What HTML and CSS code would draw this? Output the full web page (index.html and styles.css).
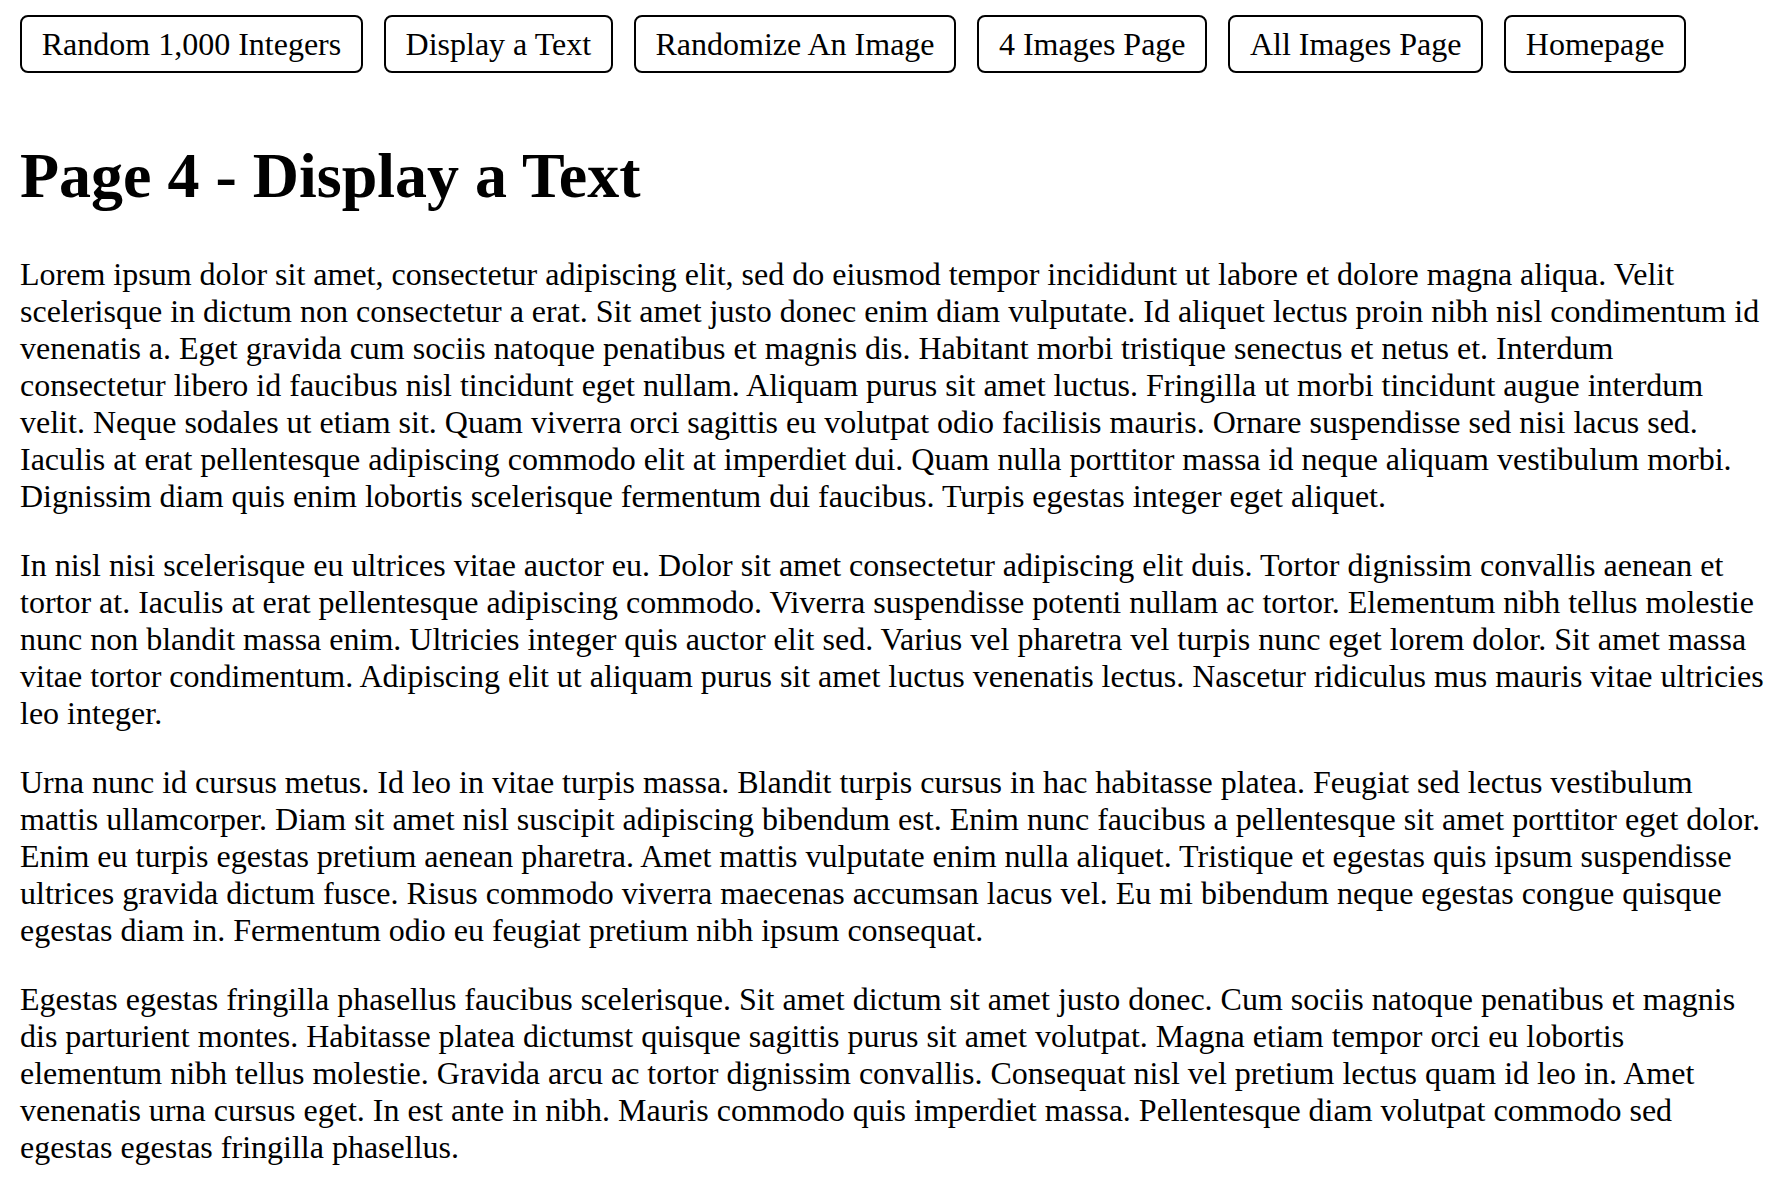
FILE: index.html
```html
<!DOCTYPE html>
<html lang="en">
<head>
<meta charset="utf-8">
<title>Page 4 - Display a Text</title>
<link rel="stylesheet" href="styles.css">
</head>
<body>
<div class="page">
  <nav class="nav">
    <button class="nav-btn">Random 1,000 Integers</button>
    <button class="nav-btn">Display a Text</button>
    <button class="nav-btn">Randomize An Image</button>
    <button class="nav-btn">4 Images Page</button>
    <button class="nav-btn">All Images Page</button>
    <button class="nav-btn">Homepage</button>
  </nav>
  <h1 class="title">Page 4 - Display a Text</h1>
  <p class="para">Lorem ipsum dolor sit amet, consectetur adipiscing elit, sed do eiusmod tempor incididunt ut labore et dolore magna aliqua. Velit scelerisque in dictum non consectetur a erat. Sit amet justo donec enim diam vulputate. Id aliquet lectus proin nibh nisl condimentum id venenatis a. Eget gravida cum sociis natoque penatibus et magnis dis. Habitant morbi tristique senectus et netus et. Interdum consectetur libero id faucibus nisl tincidunt eget nullam. Aliquam purus sit amet luctus. Fringilla ut morbi tincidunt augue interdum velit. Neque sodales ut etiam sit. Quam viverra orci sagittis eu volutpat odio facilisis mauris. Ornare suspendisse sed nisi lacus sed. Iaculis at erat pellentesque adipiscing commodo elit at imperdiet dui. Quam nulla porttitor massa id neque aliquam vestibulum morbi. Dignissim diam quis enim lobortis scelerisque fermentum dui faucibus. Turpis egestas integer eget aliquet.</p>
  <p class="para">In nisl nisi scelerisque eu ultrices vitae auctor eu. Dolor sit amet consectetur adipiscing elit duis. Tortor dignissim convallis aenean et tortor at. Iaculis at erat pellentesque adipiscing commodo. Viverra suspendisse potenti nullam ac tortor. Elementum nibh tellus molestie nunc non blandit massa enim. Ultricies integer quis auctor elit sed. Varius vel pharetra vel turpis nunc eget lorem dolor. Sit amet massa vitae tortor condimentum. Adipiscing elit ut aliquam purus sit amet luctus venenatis lectus. Nascetur ridiculus mus mauris vitae ultricies leo integer.</p>
  <p class="para">Urna nunc id cursus metus. Id leo in vitae turpis massa. Blandit turpis cursus in hac habitasse platea. Feugiat sed lectus vestibulum mattis ullamcorper. Diam sit amet nisl suscipit adipiscing bibendum est. Enim nunc faucibus a pellentesque sit amet porttitor eget dolor. Enim eu turpis egestas pretium aenean pharetra. Amet mattis vulputate enim nulla aliquet. Tristique et egestas quis ipsum suspendisse ultrices gravida dictum fusce. Risus commodo viverra maecenas accumsan lacus vel. Eu mi bibendum neque egestas congue quisque egestas diam in. Fermentum odio eu feugiat pretium nibh ipsum consequat.</p>
  <p class="para">Egestas egestas fringilla phasellus faucibus scelerisque. Sit amet dictum sit amet justo donec. Cum sociis natoque penatibus et magnis dis parturient montes. Habitasse platea dictumst quisque sagittis purus sit amet volutpat. Magna etiam tempor orci eu lobortis elementum nibh tellus molestie. Gravida arcu ac tortor dignissim convallis. Consequat nisl vel pretium lectus quam id leo in. Amet venenatis urna cursus eget. In est ante in nibh. Mauris commodo quis imperdiet massa. Pellentesque diam volutpat commodo sed egestas egestas fringilla phasellus.</p>
</div>
</body>
</html>
```

FILE: styles.css
```css
html, body {
  margin: 0;
  padding: 0;
  background: #ffffff;
}

body {
  font-family: "Liberation Serif", "Times New Roman", Times, serif;
  color: #000000;
  font-size: 32px;
}

.page {
  padding: 15px 10px 20px 20px;
}

.nav {
  display: flex;
  flex-wrap: wrap;
  gap: 21px;
}

.nav-btn {
  font-family: "Liberation Serif", "Times New Roman", Times, serif;
  font-size: 32px;
  line-height: 38px;
  color: #000000;
  background: #ffffff;
  border: 2px solid #000000;
  border-radius: 8px;
  padding: 8px 19.7px;
  margin: 0;
  cursor: pointer;
}

.title {
  font-size: 64px;
  font-weight: bold;
  line-height: normal;
  margin: 66px 0 43px 0;
}

.para {
  font-size: 32px;
  line-height: normal;
  margin: 32px 0;
}

.title + .para {
  margin-top: 43px;
}
```
